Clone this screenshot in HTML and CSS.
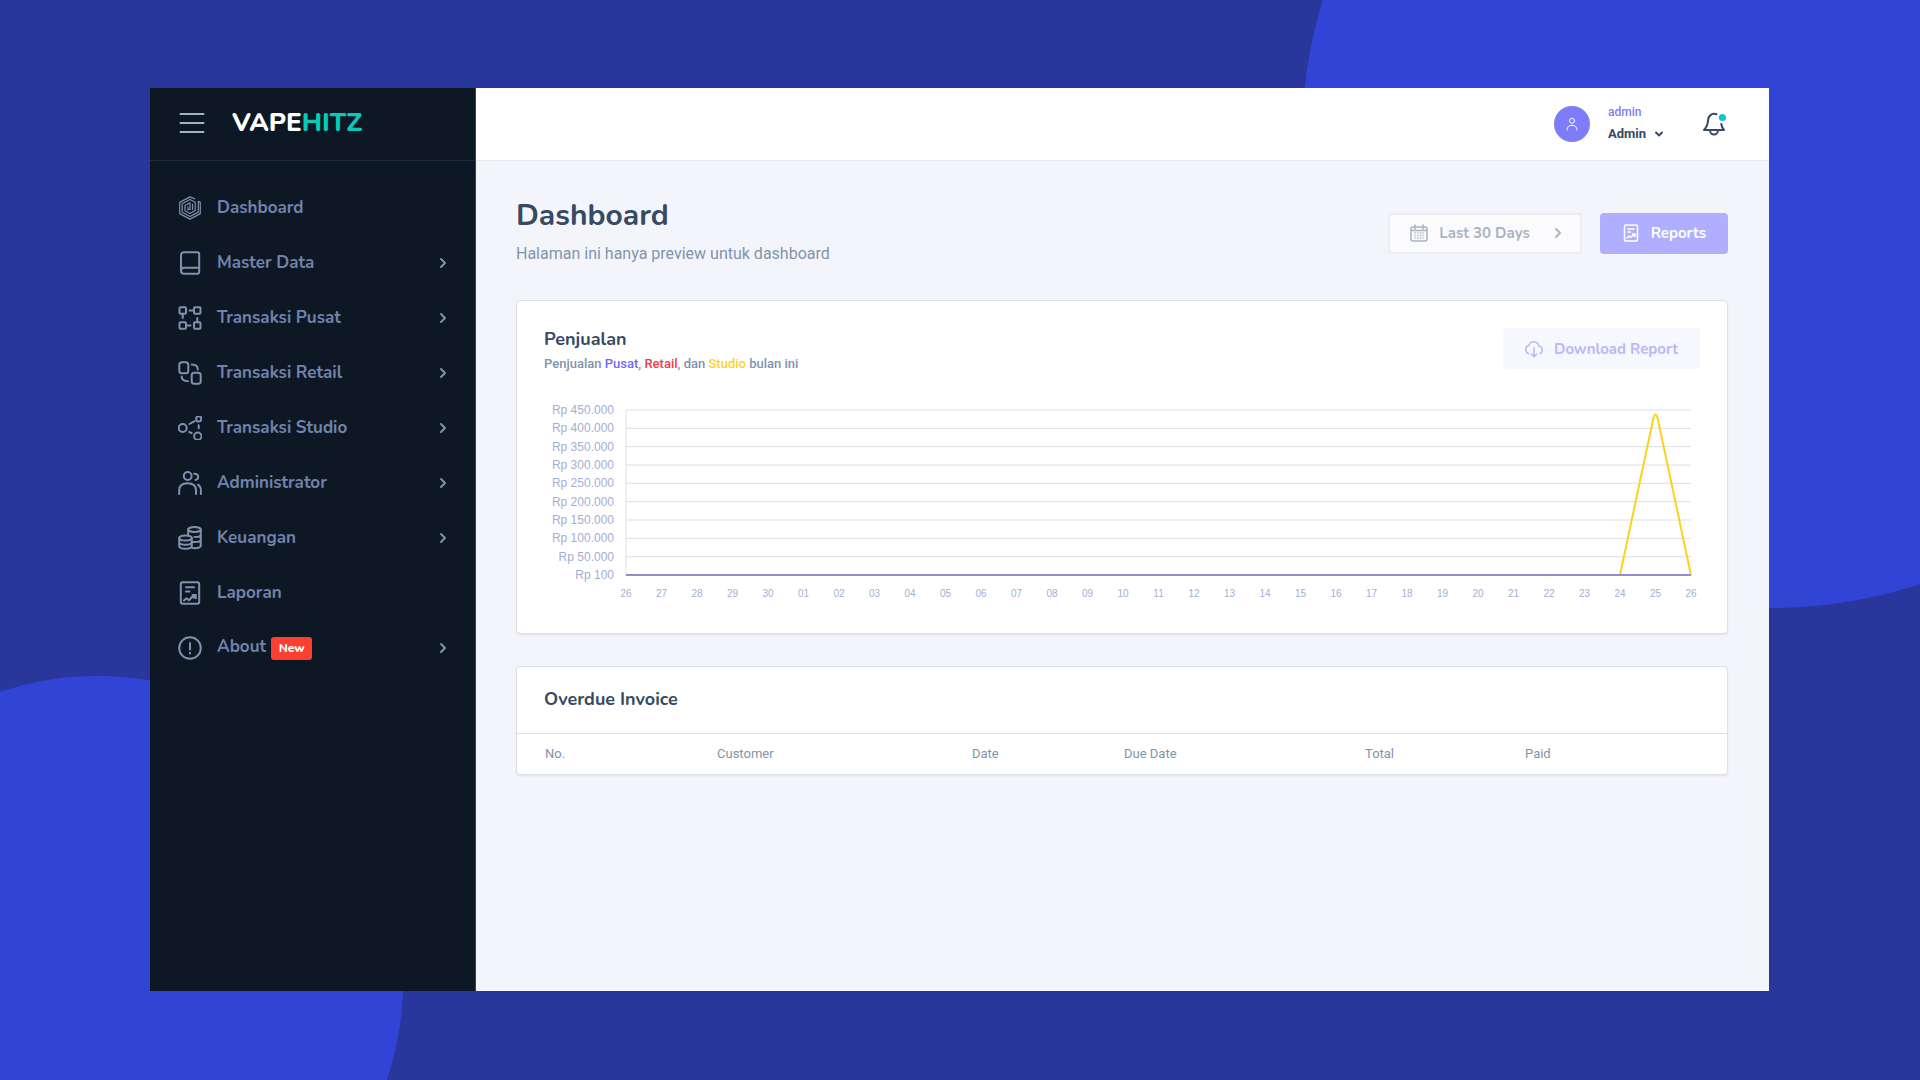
FILE: index.html
```html
<!DOCTYPE html>
<html lang="id">
<head>
<meta charset="utf-8">
<meta name="viewport" content="width=device-width, initial-scale=1">
<title>Vapehitz – Dashboard</title>
<link rel="stylesheet" href="styles.css">
</head>
<body>
<div class="stage">
  <span class="blob blob-top"></span>
  <span class="blob blob-bottom"></span>

  <div class="app">
    <aside class="sidebar">
      <div class="brand-bar">
        <button class="icon-button" type="button" aria-label="Menu">
          <svg class="menu-icon" viewBox="0 0 26 20"><path d="M1.500 1h23M1.500 10h23M1.500 19h23"/></svg>
        </button>
        <a class="brand" href="#">VAPE<span class="brand-accent">HITZ</span></a>
      </div>
      <nav class="nav">
        <a class="nav-link" href="#">
          <svg class="icon fine" viewBox="0 0 24 24"><path d="M16.800 2.800 12 .9 1.700 6.400v11.200L12 23.100l10.300-5.500V6.400l-2-1.100v10.800L12 20.500l-7.800-4.200V7.700L12 3.500l5.200 2.700v8.300L12 17.500l-5-2.800V9.500l5-2.700v6.600l-2 .2v-2.500M14.500 8.200v5.200"/></svg>
          <span class="nav-text">Dashboard</span>
        </a>
        <a class="nav-link" href="#">
          <svg class="icon" viewBox="0 0 24 24"><path d="M6 1.200h13.200a2 2 0 0 1 2 2v17.600a2 2 0 0 1-2 2H6a3 3 0 0 1-3-3V4.200a3 3 0 0 1 3-3zM3 19.700a3 3 0 0 1 3-2.900h15.200"/></svg>
          <span class="nav-text">Master Data</span>
          <svg class="chevron" viewBox="0 0 8 12"><path d="m2 2 4 4-4 4"/></svg>
        </a>
        <a class="nav-link" href="#">
          <svg class="icon" viewBox="0 0 24 24"><rect x="1.500" y="1.200" width="6.500" height="6.500" rx="1"/><rect x="16" y="1.200" width="6.500" height="6.500" rx="1"/><rect x="1.500" y="16.300" width="6.500" height="6.500" rx="1"/><rect x="16" y="16.300" width="6.500" height="6.500" rx="1"/><path d="M11.500 4.500H16M4.700 7.700V12M8 19.500h4.500M19.300 16.300V12"/></svg>
          <span class="nav-text">Transaksi Pusat</span>
          <svg class="chevron" viewBox="0 0 8 12"><path d="m2 2 4 4-4 4"/></svg>
        </a>
        <a class="nav-link" href="#">
          <svg class="icon" viewBox="0 0 24 24"><rect x="1.300" y="1.200" width="9" height="11" rx="2.500"/><rect x="13.700" y="11.800" width="9" height="11" rx="2.500"/><path d="M13.800 3.500c3.800 0 6 1.600 6 5M3.700 15.500c0 3.400 2.500 4.700 6.300 4.700"/></svg>
          <span class="nav-text">Transaksi Retail</span>
          <svg class="chevron" viewBox="0 0 8 12"><path d="m2 2 4 4-4 4"/></svg>
        </a>
        <a class="nav-link" href="#">
          <svg class="icon" viewBox="0 0 24 24"><circle cx="4.700" cy="12" r="4"/><circle cx="20.700" cy="2.900" r="2.600"/><circle cx="19.800" cy="20.200" r="3.700"/><path d="m11.500 8 5-2.800M20.700 9.200v3M11.200 16l2.600 1.200"/></svg>
          <span class="nav-text">Transaksi Studio</span>
          <svg class="chevron" viewBox="0 0 8 12"><path d="m2 2 4 4-4 4"/></svg>
        </a>
        <a class="nav-link" href="#">
          <svg class="icon" viewBox="0 0 24 24"><circle cx="9.700" cy="5" r="3.900"/><path d="M1.200 23v-3.700c0-4.600 3.400-7.100 8.400-7.100s8.400 2.500 8.400 7.100V23M16.200 2.700c2.600.1 4 1.300 4 3.100 0 1.700-.9 2.700-2.700 3.100M20 13.700c1.900 1.200 2.900 3.200 2.900 6V23"/></svg>
          <span class="nav-text">Administrator</span>
          <svg class="chevron" viewBox="0 0 8 12"><path d="m2 2 4 4-4 4"/></svg>
        </a>
        <a class="nav-link" href="#">
          <svg class="icon" viewBox="0 0 24 24"><ellipse cx="16.500" cy="3.500" rx="6.300" ry="2.500"/><path d="M10.200 3.500v5M22.800 3.500v16c0 1.600-2.800 2.700-6.300 2.700l-2-.1M22.800 8.500c0 1.500-2.800 2.500-6.300 2.500M22.800 13.500c0 1.500-2.800 2.600-6.300 2.600h-1.800"/><ellipse cx="7.500" cy="12" rx="6.300" ry="2.600"/><path d="M1.200 12v8c0 1.600 2.800 2.800 6.300 2.800s6.300-1.200 6.300-2.800v-8M1.200 16c0 1.600 2.800 2.800 6.300 2.800s6.300-1.200 6.300-2.800"/></svg>
          <span class="nav-text">Keuangan</span>
          <svg class="chevron" viewBox="0 0 8 12"><path d="m2 2 4 4-4 4"/></svg>
        </a>
        <a class="nav-link" href="#">
          <svg class="icon" viewBox="0 0 24 24"><rect x="2.800" y="1.200" width="18.400" height="21.600" rx="2"/><path d="M8 6.200h8M8 10.500h3.500M6 19.500l2.500-2.300 2.500 2 3.500-3.700 1.300 1.200 2-2.500M14.500 14h3.300v3.300"/></svg>
          <span class="nav-text">Laporan</span>
        </a>
        <a class="nav-link" href="#">
          <svg class="icon" viewBox="0 0 24 24"><circle cx="12" cy="12" r="10.800"/><path d="M12 7v6.500M12 16.800v.7"/></svg>
          <span class="nav-text">About <span class="badge">New</span></span>
          <svg class="chevron" viewBox="0 0 8 12"><path d="m2 2 4 4-4 4"/></svg>
        </a>
      </nav>
    </aside>

    <div class="main">
      <header class="topbar">
        <span class="avatar">
          <svg class="avatar-icon" viewBox="0 0 12 14"><circle cx="6" cy="3.800" r="2.500"/><path d="M1 13c0-3 2-4.700 5-4.700s5 1.700 5 4.700"/></svg>
        </span>
        <button class="user" type="button">
          <span class="user-role">admin</span>
          <span class="user-name">Admin
            <svg class="caret" viewBox="0 0 10 6"><path d="M2 1.500 5 4.500l3-3"/></svg>
          </span>
        </button>
        <button class="icon-button bell" type="button" aria-label="Notifications">
          <svg class="bell-icon" viewBox="0 0 24 24"><path d="M14.500 2.200C9.500.8 6.200 4 6 8.500c-.2 4.500-1.300 6.800-4 9.500h20c-1.300-1.500-2.300-3.500-2.800-6M8 18.200a4 4.300 0 0 0 8 0"/><circle class="bell-dot" cx="20.500" cy="5.500" r="3.600"/></svg>
        </button>
      </header>

      <main class="content">
        <div class="page-head">
          <div class="page-titles">
            <h1 class="page-title">Dashboard</h1>
            <p class="page-subtitle">Halaman ini hanya preview untuk dashboard</p>
          </div>
          <div class="actions">
            <button class="button button-light" type="button">
              <svg class="button-icon" viewBox="0 0 18 18"><rect x="1" y="3" width="16" height="14" rx="2"/><path d="M5 1v4M13 1v4"/><path class="dots" d="M1.500 6.500h15M5 9h.1M8 9h.1M10.500 9h.1M13 9h.1M5 11.500h.1M8 11.500h.1M10.500 11.500h.1M13 11.500h.1M5 14h.1M8 14h.1M10.500 14h.1M13 14h.1"/></svg>
              Last 30 Days
              <svg class="button-chevron" viewBox="0 0 8 12"><path d="m2 2 4 4-4 4"/></svg>
            </button>
            <button class="button button-primary" type="button">
              <svg class="button-icon" viewBox="0 0 18 18"><rect x="2.500" y="1" width="13" height="16" rx="1.500"/><path d="M6 5h6M6 8h2.500M5 14l2-2 1.500 1.500 2.500-2.500 1 1 1.500-1.500M10.500 10h2.500v2.500"/></svg>
              Reports
            </button>
          </div>
        </div>

        <section class="card sales">
          <div class="card-head">
            <div>
              <h2 class="card-title">Penjualan</h2>
              <p class="card-subtitle">Penjualan <span class="tone-pusat">Pusat</span>, <span class="tone-retail">Retail</span>, dan <span class="tone-studio">Studio</span> bulan ini</p>
            </div>
            <button class="button button-ghost" type="button">
              <svg class="button-icon" viewBox="0 0 18 18"><path d="M3.500 13.500C1.500 12.600.7 11.300.7 9.500c0-2.200 1.300-3.600 3.200-4C4.600 3 6.300 1.700 8.700 1.700c2.700 0 4.600 1.700 5 4.400 2.300.3 3.600 1.800 3.600 3.900 0 1.700-.8 2.900-2.300 3.500M9 7.500v9M6.300 14 9 16.700l2.700-2.700"/></svg>
              Download Report
            </button>
          </div>
          <div class="chart">
            <div class="axis-y">
              <span>Rp 450.000</span><span>Rp 400.000</span><span>Rp 350.000</span><span>Rp 300.000</span><span>Rp 250.000</span><span>Rp 200.000</span><span>Rp 150.000</span><span>Rp 100.000</span><span>Rp 50.000</span><span>Rp 100</span>
            </div>
            <svg class="plot" viewBox="0 0 1065 165" preserveAspectRatio="none">
              <path class="grid-line" d="M0 0H1065M0 18.330H1065M0 36.670H1065M0 55H1065M0 73.330H1065M0 91.670H1065M0 110H1065M0 128.330H1065M0 146.670H1065M0 0V165"/>
              <path class="line-studio" d="M0 165H994L1027 10Q1029.500-1 1032 10L1065 165"/>
              <path class="line-pusat" d="M0 165H1065"/>
            </svg>
            <div class="axis-x">
              <span>26</span><span>27</span><span>28</span><span>29</span><span>30</span><span>01</span><span>02</span><span>03</span><span>04</span><span>05</span><span>06</span><span>07</span><span>08</span><span>09</span><span>10</span><span>11</span><span>12</span><span>13</span><span>14</span><span>15</span><span>16</span><span>17</span><span>18</span><span>19</span><span>20</span><span>21</span><span>22</span><span>23</span><span>24</span><span>25</span><span>26</span>
            </div>
          </div>
        </section>

        <section class="card invoices">
          <h2 class="card-title invoices-title">Overdue Invoice</h2>
          <table class="table">
            <colgroup><col class="col-no"><col class="col-customer"><col class="col-date"><col class="col-due"><col class="col-total"><col class="col-paid"></colgroup>
            <thead><tr><th>No.</th><th>Customer</th><th>Date</th><th>Due Date</th><th>Total</th><th>Paid</th></tr></thead>
          </table>
        </section>
      </main>
    </div>
  </div>
</div>
</body>
</html>
```
FILE: styles.css
```css
:root {
  --heading: "Nunito", "Open Sans", sans-serif;
  --body: "Roboto", sans-serif;
  --chart: "Liberation Sans", Arial, sans-serif;
  --violet: #7f7cfa;
  --ink: #364a63;
  --muted: #8094ae;
  --line: #dbdfea;
}

* { box-sizing: border-box; }

body {
  margin: 0;
  font-family: var(--body);
  color: var(--ink);
}

h1, h2, p { margin: 0; }

button {
  font: inherit;
  color: inherit;
  background: none;
  border: 0;
  padding: 0;
}

a { color: inherit; text-decoration: none; }

svg {
  display: block;
  flex: none;
  fill: none;
  stroke: currentColor;
  stroke-linecap: round;
  stroke-linejoin: round;
}

.stage {
  position: relative;
  display: flex;
  min-height: 100vh;
  padding: 88px 151px 89px 150px;
  overflow: hidden;
  background: #29379c;
}

.blob {
  position: absolute;
  border-radius: 50%;
  background: #3244d6;
}

.blob-top { width: 940px; height: 940px; top: -332px; right: -322px; }
.blob-bottom { width: 612px; height: 612px; left: -209px; bottom: -208px; }

.app {
  position: relative;
  display: flex;
  flex: 1;
  min-width: 0;
}

/* Sidebar */
.sidebar {
  flex: none;
  width: 326px;
  background: #0e1824;
  border-right: 1px solid #384151;
  color: #7083ad;
}

.brand-bar {
  display: flex;
  align-items: center;
  gap: 27px;
  height: 73px;
  padding: 0 29px 2px;
  border-bottom: 1px solid #202c3d;
}

.menu-icon { width: 26px; height: 20px; stroke: #a3b1cc; stroke-width: 2; }

.brand {
  font: 800 26px/36px var(--heading);
  color: #fff;
}

.brand-accent { color: #09c9bb; }

.nav {
  display: flex;
  flex-direction: column;
  padding-top: 19px;
}

.nav-link {
  display: flex;
  align-items: center;
  height: 55px;
  padding: 0 28px;
  font: 700 17px/24px var(--heading);
}

.icon { width: 24px; height: 24px; margin-right: 15px; stroke: #8091ae; stroke-width: 2; }
.fine { stroke-width: 1.200; }
.nav-text { flex: 1; }
.chevron { width: 8px; height: 12px; stroke: #8091ae; stroke-width: 2; }

.badge {
  display: inline-block;
  padding: 0 8px;
  border-radius: 3px;
  background: #fb4032;
  color: #fff;
  font: 800 12px/23px var(--heading);
}

/* Top bar */
.main {
  display: flex;
  flex-direction: column;
  flex: 1;
  min-width: 0;
  background: #f4f5fa;
}

.topbar {
  display: flex;
  align-items: center;
  justify-content: flex-end;
  height: 73px;
  padding: 0 43px;
  background: #fff;
  border-bottom: 1px solid #e6e9f2;
}

.avatar {
  display: grid;
  place-items: center;
  width: 36px;
  height: 36px;
  margin-right: 18px;
  border-radius: 50%;
  background: var(--violet);
  color: #fff;
}

.avatar-icon { width: 12px; height: 14px; stroke-width: 1; }

.user {
  display: flex;
  flex-direction: column;
  margin-right: 38px;
  padding-bottom: 2px;
  text-align: left;
  font-size: 13px;
  font-weight: 500;
  line-height: 22px;
}

.user-role { font-size: 12px; color: var(--violet); }
.user-name { display: flex; align-items: center; gap: 8px; font-weight: 700; }
.caret { width: 10px; height: 6px; stroke-width: 2; }
.bell-icon { width: 24px; height: 24px; stroke-width: 2; }
.bell-dot { fill: #09c2de; stroke: none; }

/* Page */
.content { padding: 33px 41px 33px 40px; }

.page-head {
  display: flex;
  align-items: center;
  justify-content: space-between;
  margin-bottom: 30px;
}

.page-title { font: 700 30px/44px var(--heading); }
.page-subtitle { font-size: 16px; line-height: 32px; color: var(--muted); }
.actions { display: flex; gap: 18px; padding-top: 2px; }

.button {
  display: flex;
  align-items: center;
  gap: 11px;
  height: 41px;
  padding: 0 21px;
  border: 1px solid transparent;
  border-radius: 4px;
  font: 700 15px/24px var(--heading);
}

.button-icon { width: 18px; height: 18px; stroke-width: 1.500; }
.button-chevron { width: 8px; height: 12px; margin-left: 13px; stroke-width: 2; }
.button-light { padding: 0 18px 0 20px; background: #fbfbfd; border: 2px solid #ebeef5; color: #a9b3c2; }
.button-primary { background: #b0afff; color: #fff; }
.button-ghost { background: #f7f7fe; color: #bab8fb; }

.card {
  background: #fff;
  border: 1px solid var(--line);
  border-radius: 4px;
  box-shadow: 0 1px 2px #dfe2ee;
}

.card + .card { margin-top: 32px; }
.card-title { font: 700 18px/22px var(--heading); }
.sales { padding: 27px; }
.card-head { display: flex; align-items: flex-start; justify-content: space-between; }
.card-subtitle { font-size: 13px; font-weight: 500; line-height: 28px; color: var(--muted); }
.tone-pusat { color: #7367f5; }
.tone-retail { color: #f9384b; }
.tone-studio { color: #fcd51d; }

/* Chart */
.chart {
  display: grid;
  grid-template-columns: 70px 1fr;
  grid-template-rows: 183px 22px;
  column-gap: 12px;
  padding: 23px 9px 0 0;
  font-family: var(--chart);
  color: #a3aed6;
}

.axis-y {
  display: flex;
  flex-direction: column;
  justify-content: space-between;
  text-align: right;
  font-size: 12px;
  line-height: 18px;
}

.plot { align-self: center; width: 100%; height: 165px; overflow: visible; }
.plot path { vector-effect: non-scaling-stroke; stroke-linecap: butt; }
.grid-line { stroke: #dcdfe6; stroke-width: 1; }
.line-studio { stroke: #fbd21c; stroke-width: 2; }
.line-pusat { stroke: #9489d4; stroke-width: 2; }

.axis-x {
  grid-column: 2;
  display: flex;
  justify-content: space-between;
  font-size: 10px;
  line-height: 20px;
}

.axis-x span { display: flex; justify-content: center; width: 0; }

/* Invoices */
.invoices-title { padding: 21px 27px 23px; border-bottom: 1px solid var(--line); }
.table { width: 100%; table-layout: fixed; border-collapse: collapse; }

.table th {
  height: 40px;
  padding: 0 0 2px 28px;
  text-align: left;
  font-size: 13px;
  font-weight: 400;
  color: var(--muted);
}

.col-no { width: 172px; }
.col-customer { width: 255px; }
.col-date { width: 152px; }
.col-due { width: 241px; }
.col-total { width: 160px; }
.col-paid { width: 231px; }
```
